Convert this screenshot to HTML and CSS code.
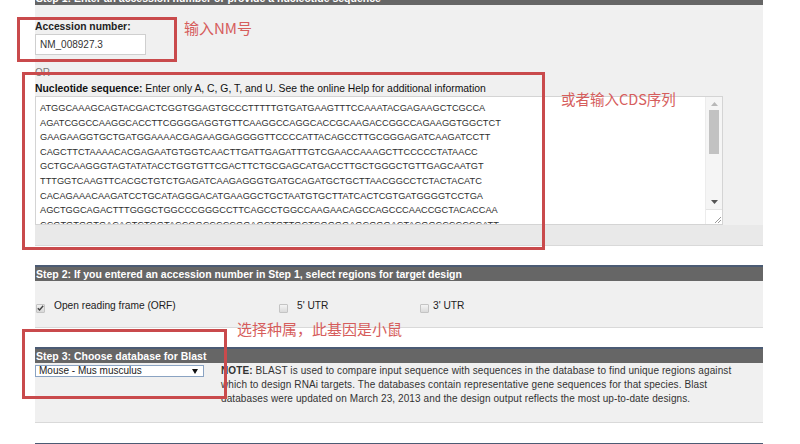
FILE: index.html
```html
<!DOCTYPE html>
<html>
<head>
<meta charset="utf-8">
<link rel="stylesheet" href="styles.css">
</head>
<body>
<div class="page">
  <section class="step">
    <div class="step-head step-head-cut">Step 1: Enter an accession number or provide a nucleotide sequence</div>
    <div class="panel panel-1">
      <div class="field-label">Accession number:</div>
      <div class="text-input">NM_008927.3</div>
      <div class="or">OR</div>
      <div class="seq-label"><b>Nucleotide sequence:</b> Enter only A, C, G, T, and U. See the online Help for additional information</div>
      <div class="textarea">
        <div class="seq">ATGGCAAAGCAGTACGACTCGGTGGAGTGCCCTTTTTGTGATGAAGTTTCCAAATACGAGAAGCTCGCCA
AGATCGGCCAAGGCACCTTCGGGGAGGTGTTCAAGGCCAGGCACCGCAAGACCGGCCAGAAGGTGGCTCT
GAAGAAGGTGCTGATGGAAAACGAGAAGGAGGGGTTCCCCATTACAGCCTTGCGGGAGATCAAGATCCTT
CAGCTTCTAAAACACGAGAATGTGGTCAACTTGATTGAGATTTGTCGAACCAAAGCTTCCCCCTATAACC
GCTGCAAGGGTAGTATATACCTGGTGTTCGACTTCTGCGAGCATGACCTTGCTGGGCTGTTGAGCAATGT
TTTGGTCAAGTTCACGCTGTCTGAGATCAAGAGGGTGATGCAGATGCTGCTTAACGGCCTCTACTACATC
CACAGAAACAAGATCCTGCATAGGGACATGAAGGCTGCTAATGTGCTTATCACTCGTGATGGGGTCCTGA
AGCTGGCAGACTTTGGGCTGGCCCGGGCCTTCAGCCTGGCCAAGAACAGCCAGCCCAACCGCTACACCAA
CCGTGTGGTGACACTCTGGTACCGGCCCCCGGAGCTGTTGCTCGGGGAGCGGGACTACGGCCCCCCCATT
GACCTGTGGGGTGCCGGGTGCATCATGGCAGAGATGTGGACCCGCAGCCCCATCATGCAGGGCAACACGG</div>
        <div class="vscroll">
          <svg class="arrow" width="7" height="4" viewBox="0 0 7 4"><path d="M0 4L3.5 0L7 4Z" fill="#b8b8b8"/></svg>
          <div class="thumb"></div>
          <svg class="arrow arrow-down" width="7" height="4" viewBox="0 0 7 4"><path d="M0 0L3.5 4L7 0Z" fill="#555"/></svg>
          <div class="grip"><svg width="9" height="9" viewBox="0 0 9 9"><path d="M8 2L2 8M8 5L5 8" stroke="#999" stroke-width="1"/></svg></div>
        </div>
      </div>
      <div class="panel-foot"></div>
    </div>
  </section>

  <section class="step">
    <div class="step-head">Step 2: If you entered an accession number in Step 1, select regions for target design</div>
    <div class="panel panel-2">
      <label class="opt opt-orf"><span class="cb checked"><svg width="7" height="6" viewBox="0 0 7 6"><path d="M0.8 3.2L2.6 5L6.2 0.8" fill="none" stroke="#444" stroke-width="1.4"/></svg></span>Open reading frame (ORF)</label>
      <label class="opt opt-5"><span class="cb"></span>5' UTR</label>
      <label class="opt opt-3"><span class="cb"></span>3' UTR</label>
    </div>
  </section>

  <section class="step">
    <div class="step-head">Step 3: Choose database for Blast</div>
    <div class="panel panel-3">
      <div class="select"><span>Mouse - Mus musculus</span><svg width="6" height="5" viewBox="0 0 6 5"><path d="M0 0H6L3 5Z" fill="#111"/></svg></div>
      <p class="note"><b>NOTE:</b> BLAST is used to compare input sequence with sequences in the database to find unique regions against which to design RNAi targets. The databases contain representative gene sequences for that species. Blast databases were updated on March 23, 2013 and the design output reflects the most up-to-date designs.</p>
    </div>
  </section>

  <section class="step step-last">
    <div class="step-head">Step 4: Design options</div>
  </section>
</div>

<div class="mark mark-1"></div>
<div class="mark mark-2"></div>
<div class="mark mark-3"></div>
<div class="memo memo-1">输入NM号</div>
<div class="memo memo-2">或者输入CDS序列</div>
<div class="memo memo-3">选择种属，此基因是小鼠</div>
</body>
</html>
```

FILE: styles.css
```css
html, body {
  margin: 0;
  padding: 0;
  background: #ffffff;
  height: 444px;
  overflow: hidden;
}
body {
  position: relative;
  font-family: "Liberation Sans", Arial, sans-serif;
  color: #222;
  font-size: 10px;
}
.page {
  margin-left: 35px;
  width: 728px;
}
.step + .step {
  margin-top: 19px;
}
.step-last {
  margin-top: 20px !important;
}
.step-head {
  box-sizing: border-box;
  height: 16px;
  background: #666666;
  border-top: 2px solid #4b5b74;
  color: #ffffff;
  font-weight: bold;
  font-size: 10.5px;
  line-height: 14px;
  padding-left: 1px;
  white-space: nowrap;
  overflow: hidden;
}
.step-head-cut {
  margin-top: -11px;
}
.panel {
  background: #f0f0f0;
  border-bottom: 1px solid #d9d9d9;
}
.panel-1 {
  padding-top: 15px;
}
.field-label {
  font-weight: bold;
  font-size: 10.3px;
  line-height: 13px;
}
.text-input {
  box-sizing: border-box;
  margin-top: 1px;
  width: 111px;
  height: 21px;
  background: #fff;
  border: 1px solid #cfcfcf;
  padding-left: 4px;
  font-size: 10px;
  line-height: 19px;
  color: #333;
}
.or {
  margin-top: 12px;
  color: #777;
  font-size: 10px;
  line-height: 12px;
}
.seq-label {
  margin-top: 4px;
  font-size: 10.4px;
  line-height: 12px;
  color: #111;
}
.textarea {
  box-sizing: border-box;
  margin-top: 1px;
  width: 688px;
  height: 129px;
  background: #fff;
  border: 1px solid #d4d4d4;
  display: flex;
  overflow: hidden;
}
.seq {
  flex: 1;
  white-space: pre;
  overflow: hidden;
  padding: 4px 0 0 4px;
  font-size: 9.22px;
  line-height: 14.6px;
  color: #2e2e2e;
}
.vscroll {
  width: 16px;
  background: #f5f5f5;
  border-left: 1px solid #ececec;
  display: flex;
  flex-direction: column;
  align-items: center;
}
.arrow {
  margin-top: 5px;
  flex: none;
}
.thumb {
  margin-top: 4px;
  width: 10px;
  height: 44px;
  background: #c2c2c2;
}
.arrow-down {
  margin-top: auto;
  margin-bottom: 5px;
}
.grip {
  box-sizing: border-box;
  width: 16px;
  height: 15px;
  background: #fff;
  border-top: 1px solid #e4e4e4;
  display: flex;
  align-items: flex-end;
  justify-content: flex-end;
}
.panel-foot {
  height: 20px;
  background: #e9e9e9;
}
.panel-2 {
  height: 47px;
  display: grid;
  grid-template-columns: 243px 141px 1fr;
  align-items: center;
  padding-top: 2px;
  box-sizing: border-box;
}
.opt {
  display: flex;
  align-items: center;
  gap: 9px;
  font-size: 10.2px;
  color: #222;
  padding-left: 1px;
}
.opt-3 {
  gap: 4px;
}
.cb {
  box-sizing: border-box;
  width: 9px;
  height: 9px;
  margin-top: 6px;
  border: 1px solid #c4c4c4;
  border-radius: 1px;
  background: linear-gradient(#f4f4f4, #dadada);
  display: flex;
  align-items: center;
  justify-content: center;
}
.cb.checked {
  background: linear-gradient(#f0f0f0, #d8d8d8);
}
.panel-3 {
  height: 59px;
  display: flex;
  align-items: flex-start;
}
.select {
  box-sizing: border-box;
  margin-top: 2px;
  width: 169px;
  height: 12px;
  border: 1px solid #8aa3c2;
  background: #fff;
  display: flex;
  align-items: center;
  justify-content: space-between;
  padding: 0 5px 0 3px;
  font-size: 10px;
  line-height: 10px;
  color: #222;
}
.note {
  margin: 1px 0 0 17px;
  width: 525px;
  font-size: 10px;
  line-height: 14px;
  color: #333;
  letter-spacing: 0.1px;
}
.mark {
  position: absolute;
  box-sizing: border-box;
  border: 3px solid #c94a4c;
}
.mark-1 { left: 17px; top: 17px; width: 160px; height: 45px; }
.mark-2 { left: 22px; top: 72px; width: 523px; height: 178px; }
.mark-3 { left: 22px; top: 329px; width: 205px; height: 70px; }
.memo {
  position: absolute;
  font-family: "Noto Sans CJK SC", "Noto Sans", sans-serif;
  color: #d65d5c;
  white-space: nowrap;
}
.memo-1 { left: 184px; top: 18px; font-size: 15px; line-height: 20px; }
.memo-2 { left: 561px; top: 89px; font-size: 14.5px; line-height: 20px; }
.memo-3 { left: 237px; top: 319px; font-size: 15px; line-height: 20px; }
```
